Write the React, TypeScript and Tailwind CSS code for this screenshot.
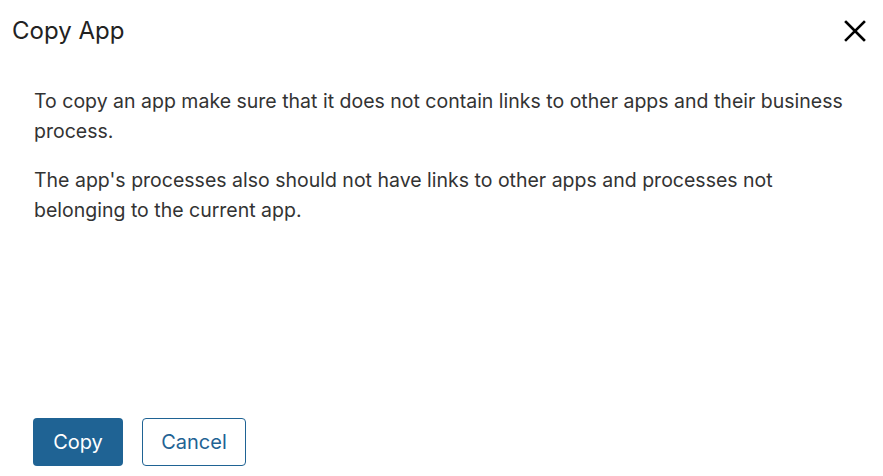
export default function App() {
    return (
        <div className="h-screen w-full bg-white flex flex-col text-[#222]" style={{ fontFamily: "Inter, 'Noto Sans', sans-serif" }}>
            <div className="flex items-center justify-between pl-[12px] pr-[16px] h-[62px]">
                <h1 className="text-[24px] font-normal text-[#222]">Copy App</h1>
                <button className="w-[24px] h-[24px] flex items-center justify-center">
                    <svg width="24" height="24" viewBox="0 0 24 24" fill="none" stroke="#000" strokeWidth="2.6" strokeLinecap="square">
                        <path d="M3 3L21 21M21 3L3 21" />
                    </svg>
                </button>
            </div>

            <div className="flex-1 px-[34px] pt-[24px] text-[19.5px] leading-[30px] text-[#333]">
                <p>To copy an app make sure that it does not contain links to other apps and their business process.</p>
                <p className="mt-[19px]">The app's processes also should not have links to other apps and processes not belonging to the current app.</p>
            </div>

            <div className="flex gap-[19px] px-[33px] pb-[10px]">
                <button className="w-[90px] h-[48px] rounded-[4px] bg-[#1f6394] text-white text-[20px]">Copy</button>
                <button className="w-[104px] h-[48px] rounded-[4px] border border-[#1f6394] text-[#1f6394] text-[20px] bg-white">Cancel</button>
            </div>
        </div>
    )
}
